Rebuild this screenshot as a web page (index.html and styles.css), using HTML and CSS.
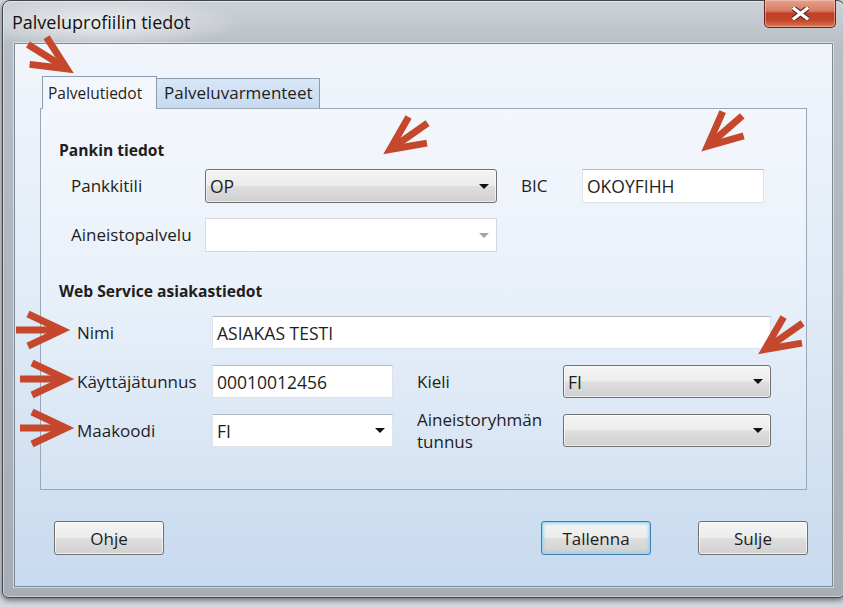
FILE: index.html
```html
<!DOCTYPE html>
<html lang="fi">
<head>
    <meta charset="UTF-8">
    <meta name="viewport" content="width=device-width, initial-scale=1.0">
    <title>Palveluprofiilin tiedot</title>
    <link rel="stylesheet" href="styles.css">
</head>
<body>
    <div class="window">
        <div class="titlebar">
            <span class="title">Palveluprofiilin tiedot</span>
            <button class="close" aria-label="Sulje">
                <svg viewBox="0 0 17 13" width="17" height="13">
                    <path d="M2 1.5 L15 11.5 M15 1.5 L2 11.5" stroke="#5b2a22" stroke-width="5.5" stroke-linecap="square"/>
                    <path d="M2 1.5 L15 11.5 M15 1.5 L2 11.5" stroke="#ffffff" stroke-width="3.2" stroke-linecap="square"/>
                </svg>
            </button>
        </div>

        <div class="client">
            <div class="tabs">
                <div class="tab active">Palvelutiedot</div>
                <div class="tab">Palveluvarmenteet</div>
            </div>

            <div class="panel">
                <div class="group-title">Pankin tiedot</div>
                <div class="bank-grid">
                    <span class="label">Pankkitili</span>
                    <div class="combo raised"><span>OP</span><i class="caret"></i></div>
                    <span class="label">BIC</span>
                    <div class="field">OKOYFIHH</div>

                    <span class="label">Aineistopalvelu</span>
                    <div class="combo disabled"><span></span><i class="caret"></i></div>
                </div>

                <div class="group-title">Web Service asiakastiedot</div>
                <div class="ws-grid">
                    <span class="label">Nimi</span>
                    <div class="field wide">ASIAKAS TESTI</div>

                    <span class="label">Käyttäjätunnus</span>
                    <div class="field">00010012456</div>
                    <span></span>
                    <span class="label">Kieli</span>
                    <div class="combo raised"><span>FI</span><i class="caret"></i></div>

                    <span class="label">Maakoodi</span>
                    <div class="combo flat"><span>FI</span><i class="caret"></i></div>
                    <span></span>
                    <span class="label">Aineistoryhmän<br>tunnus</span>
                    <div class="combo raised"><span></span><i class="caret"></i></div>
                </div>
            </div>

            <div class="actions">
                <button class="btn">Ohje</button>
                <button class="btn default">Tallenna</button>
                <button class="btn">Sulje</button>
            </div>
        </div>

        <!-- red annotation arrows drawn over the dialog -->
        <svg class="annotations" viewBox="0 0 843 607" width="843" height="607">
            <defs>
                <g id="arrow" fill="none" stroke="#c5472c" stroke-width="7">
                    <path d="M-52 0 L-8 0"/>
                    <path d="M-40 -16 L-6 0 L-40 16" stroke-linejoin="miter" stroke-miterlimit="6"/>
                </g>
            </defs>
            <use href="#arrow" transform="translate(72 72) rotate(32)"/>
            <use href="#arrow" transform="translate(385 153) rotate(145)"/>
            <use href="#arrow" transform="translate(703 150) rotate(139)"/>
            <use href="#arrow" transform="translate(68 330)"/>
            <use href="#arrow" transform="translate(72 379)"/>
            <use href="#arrow" transform="translate(72 428)"/>
            <use href="#arrow" transform="translate(760 353) rotate(145)"/>
        </svg>
    </div>
</body>
</html>
```

FILE: styles.css
```css
body {
    margin: 0;
    width: 843px;
    height: 607px;
    overflow: hidden;
    background-color: #d6d9dd;
    font-family: "Open Sans", "Noto Sans", sans-serif;
    color: #1e1e1e;
}
.window {
    position: relative;
    box-sizing: border-box;
    width: 843px;
    height: 598px;
    margin-left: 2px;
    border: 1px solid #3f454b;
    border-radius: 8px 8px 6px 6px;
    background: linear-gradient(180deg, #cdd2d7 0%, #b7bdc4 8%, #adb4bc 60%, #a6adb5 100%);
    box-shadow: 0 2px 6px rgba(0, 0, 0, 0.55), inset 0 0 0 1px rgba(255, 255, 255, 0.45);
    padding-bottom: 10px;
}
.titlebar {
    display: flex;
    justify-content: space-between;
    align-items: flex-start;
    height: 42px;
    padding-left: 9px;
    padding-right: 8px;
    background: radial-gradient(ellipse 140px 26px at 100px 22px, rgba(255, 255, 255, 0.7), rgba(255, 255, 255, 0) 100%);
    border-radius: 7px 7px 0 0;
}
.title {
    font-size: 18px;
    line-height: 22px;
    padding-top: 10px;
    color: #111;
}
.close {
    width: 72px;
    height: 28px;
    margin-top: -1px;
    padding: 0;
    display: flex;
    align-items: center;
    justify-content: center;
    border: 1px solid #5d2a22;
    border-top: none;
    border-radius: 0 0 5px 5px;
    background: linear-gradient(180deg, #e5a190 0%, #d97b63 40%, #c23f27 50%, #c4462c 75%, #dc7853 100%);
    box-shadow: inset 0 0 0 1px rgba(255, 220, 200, 0.45);
}
.client {
    box-sizing: border-box;
    width: 819px;
    height: 544px;
    margin-left: 11px;
    border: 1px solid #7f8993;
    box-shadow: 0 0 0 1px rgba(235, 240, 245, 0.6);
    background: linear-gradient(180deg, #f1f5fb 0%, #e2ecf7 45%, #c8daef 100%);
    padding-top: 32px;
}
.tabs {
    display: flex;
    align-items: flex-end;
    margin-left: 27px;
    height: 32px;
    position: relative;
    z-index: 1;
}
.tab {
    box-sizing: border-box;
    height: 30px;
    padding: 0 7px;
    font-size: 17px;
    line-height: 27px;
    border: 1px solid #8d9cac;
    border-bottom: none;
    background: linear-gradient(180deg, #d8e7f7 0%, #c6daf0 100%);
}
.tab + .tab {
    border-left: none;
}
.tab.active {
    width: 115px;
    height: 33px;
    margin-bottom: -1px;
    padding: 0 5px;
    font-size: 15.5px;
    line-height: 33px;
    background: #f3f7fc;
}
.tab:not(.active) {
    width: 163px;
}
.panel {
    box-sizing: border-box;
    width: 767px;
    height: 382px;
    margin-left: 25px;
    border: 1px solid #9aa8b6;
    padding: 31px 0 0 18px;
    background: linear-gradient(180deg, rgba(246, 249, 253, 0.7) 0%, rgba(220, 232, 246, 0.3) 100%);
}
.group-title {
    font-size: 15.6px;
    font-weight: bold;
    line-height: 20px;
}
.label {
    font-size: 17px;
    line-height: 22px;
}
.bank-grid {
    display: grid;
    grid-template-columns: 134px 292px 24px 61px 182px;
    grid-template-rows: 34px 34px;
    row-gap: 15px;
    align-items: center;
    margin: 9px 0 29px 12px;
}
.bank-grid > :nth-child(3) {
    grid-column: 4;
}
.bank-grid > :nth-child(4) {
    grid-column: 5;
    height: 34px;
}
.bank-grid > :nth-child(5) {
    grid-column: 1;
}
.ws-grid {
    display: grid;
    grid-template-columns: 135px 181px 24px 146px 208px;
    grid-auto-rows: 33px;
    row-gap: 16px;
    align-items: center;
    margin: 15px 0 0 18px;
}
.ws-grid .wide {
    grid-column: 2 / 6;
}
.field, .combo {
    box-sizing: border-box;
    height: 33px;
    font-size: 17.5px;
    display: flex;
    align-items: center;
    padding-left: 4px;
    background: #fff;
    border: 1px solid #dde3ea;
    border-top-color: #b5bac2;
}
.combo {
    justify-content: space-between;
    padding-right: 7px;
}
.bank-grid .combo {
    height: 34px;
}
.combo.raised {
    border: 1px solid #707070;
    border-radius: 3px;
    background: linear-gradient(180deg, #f4f4f4 0%, #ececec 48%, #dedede 52%, #d0d0d0 100%);
    box-shadow: inset 0 0 0 1px rgba(255, 255, 255, 0.6);
}
.combo.disabled {
    border-color: #d6d9dd;
}
.caret {
    width: 0;
    height: 0;
    border-left: 5px solid transparent;
    border-right: 5px solid transparent;
    border-top: 5px solid #111;
}
.combo.disabled .caret {
    border-top-color: #a4a4a4;
}
.actions {
    display: flex;
    align-items: center;
    gap: 47px;
    margin-top: 31px;
    padding: 0 24px 0 39px;
}
.btn {
    box-sizing: border-box;
    width: 110px;
    height: 34px;
    font-family: inherit;
    font-size: 17px;
    color: #1e1e1e;
    border: 1px solid #707070;
    border-radius: 3px;
    background: linear-gradient(180deg, #f4f4f4 0%, #ececec 48%, #dedede 52%, #d0d0d0 100%);
    box-shadow: inset 0 0 0 1px rgba(255, 255, 255, 0.7);
    padding: 0;
}
.btn.default {
    margin-left: auto;
    border-color: #3c7fb1;
    box-shadow: inset 0 0 0 1px #9ed6f3, inset 0 0 3px 2px rgba(140, 205, 240, 0.6);
}
.annotations {
    position: absolute;
    left: -3px;
    top: -1px;
    pointer-events: none;
}
```
